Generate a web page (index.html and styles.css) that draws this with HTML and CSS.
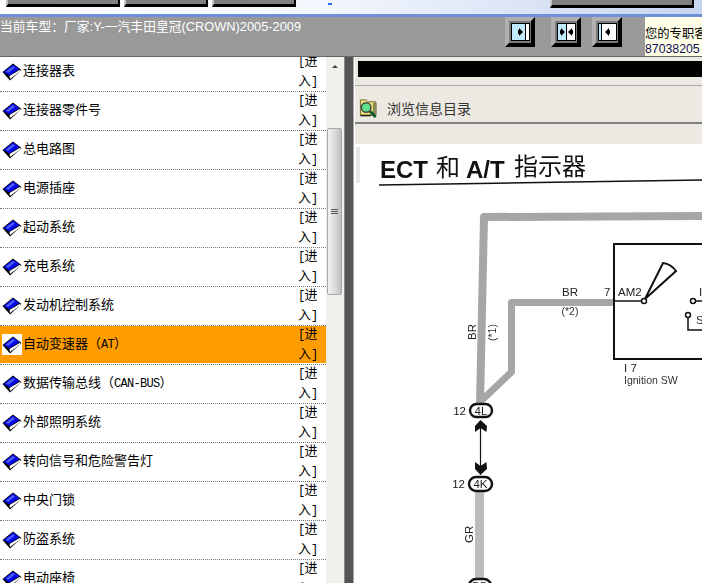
FILE: index.html
```html
<!DOCTYPE html>
<html lang="zh-CN">
<head>
    <meta charset="UTF-8">
    <title>ECT 和 A/T 指示器</title>
    <link rel="stylesheet" href="styles.css">
</head>
<body>
    <svg class="defs" width="0" height="0">
        <symbol id="book" viewBox="0 0 20 18">
            <polygon points="0.5,9 11,0.5 19.500,7 8,17.500" fill="#000"/>
            <polygon points="1.500,9 11,1.500 17.500,6 7.500,12.500" fill="#0808e8"/>
            <polygon points="4,8.500 11,3 13,4.500 6,10" fill="#4a5ef8"/>
            <polygon points="7.500,13 18,6.800 18.500,8 8,16" fill="#fff"/>
        </symbol>
    </svg>

    <!-- Top strip -->
    <div class="top-strip">
        <div class="top-btn top-btn-wide"></div>
        <div class="top-btn top-btn-mid"></div>
        <div class="top-btn top-btn-mid"></div>
        <div class="top-mark"></div>
        <div class="top-btn top-btn-right"></div>
    </div>

    <!-- Toolbar -->
    <div class="toolbar">
        <div class="car-label">当前车型：厂家:Y-一汽丰田皇冠(CROWN)2005-2009</div>
        <div class="tools">
            <div class="tool">
                <svg width="19" height="18" viewBox="0 0 19 18">
                    <rect x="0.500" y="0.500" width="18" height="17" fill="#bfeaff" stroke="#000"/>
                    <rect x="15" y="1" width="3" height="16" fill="#fff"/>
                    <line x1="14.500" y1="1" x2="14.500" y2="17" stroke="#000"/>
                    <polygon points="7,7 8,7 8,5 12,9 8,13 8,11 7,11" fill="#000"/>
                </svg>
            </div>
            <div class="tool">
                <svg width="19" height="18" viewBox="0 0 19 18">
                    <rect x="0.500" y="0.500" width="18" height="17" fill="#fff" stroke="#000"/>
                    <rect x="1" y="1" width="8" height="16" fill="#bfeaff"/>
                    <line x1="9.500" y1="1" x2="9.500" y2="17" stroke="#000"/>
                    <polygon points="3,7 4,7 4,5 8,9 4,13 4,11 3,11" fill="#000"/>
                    <polygon points="16,7 15,7 15,5 11,9 15,13 15,11 16,11" fill="#000"/>
                </svg>
            </div>
            <div class="tool tool-last">
                <svg width="19" height="18" viewBox="0 0 19 18">
                    <rect x="0.500" y="0.500" width="18" height="17" fill="#fff" stroke="#000"/>
                    <rect x="1" y="1" width="2" height="16" fill="#bfeaff"/>
                    <line x1="3.500" y1="1" x2="3.500" y2="17" stroke="#000"/>
                    <polygon points="12,7 11,7 11,5 7,9 11,13 11,11 12,11" fill="#000"/>
                </svg>
            </div>
        </div>
        <div class="contact">您的专职客服<span class="contact-num">87038205</span></div>
    </div>

    <div class="main">
        <!-- Left list -->
        <div class="list">
            <div class="row"><div class="row-inner"><span class="book"><svg width="20" height="18"><use href="#book"/></svg></span><span class="name">连接器表</span><span class="enter"><span class="latin">[</span>进入<span class="latin">]</span></span></div></div>
            <div class="row"><div class="row-inner"><span class="book"><svg width="20" height="18"><use href="#book"/></svg></span><span class="name">连接器零件号</span><span class="enter"><span class="latin">[</span>进入<span class="latin">]</span></span></div></div>
            <div class="row"><div class="row-inner"><span class="book"><svg width="20" height="18"><use href="#book"/></svg></span><span class="name">总电路图</span><span class="enter"><span class="latin">[</span>进入<span class="latin">]</span></span></div></div>
            <div class="row"><div class="row-inner"><span class="book"><svg width="20" height="18"><use href="#book"/></svg></span><span class="name">电源插座</span><span class="enter"><span class="latin">[</span>进入<span class="latin">]</span></span></div></div>
            <div class="row"><div class="row-inner"><span class="book"><svg width="20" height="18"><use href="#book"/></svg></span><span class="name">起动系统</span><span class="enter"><span class="latin">[</span>进入<span class="latin">]</span></span></div></div>
            <div class="row"><div class="row-inner"><span class="book"><svg width="20" height="18"><use href="#book"/></svg></span><span class="name">充电系统</span><span class="enter"><span class="latin">[</span>进入<span class="latin">]</span></span></div></div>
            <div class="row"><div class="row-inner"><span class="book"><svg width="20" height="18"><use href="#book"/></svg></span><span class="name">发动机控制系统</span><span class="enter"><span class="latin">[</span>进入<span class="latin">]</span></span></div></div>
            <div class="row active"><div class="row-inner"><span class="book"><svg width="20" height="18"><use href="#book"/></svg></span><span class="name">自动变速器（<span class="latin">AT</span>）</span><span class="enter"><span class="latin">[</span>进入<span class="latin">]</span></span></div></div>
            <div class="row"><div class="row-inner"><span class="book"><svg width="20" height="18"><use href="#book"/></svg></span><span class="name">数据传输总线（<span class="latin">CAN-BUS</span>）</span><span class="enter"><span class="latin">[</span>进入<span class="latin">]</span></span></div></div>
            <div class="row"><div class="row-inner"><span class="book"><svg width="20" height="18"><use href="#book"/></svg></span><span class="name">外部照明系统</span><span class="enter"><span class="latin">[</span>进入<span class="latin">]</span></span></div></div>
            <div class="row"><div class="row-inner"><span class="book"><svg width="20" height="18"><use href="#book"/></svg></span><span class="name">转向信号和危险警告灯</span><span class="enter"><span class="latin">[</span>进入<span class="latin">]</span></span></div></div>
            <div class="row"><div class="row-inner"><span class="book"><svg width="20" height="18"><use href="#book"/></svg></span><span class="name">中央门锁</span><span class="enter"><span class="latin">[</span>进入<span class="latin">]</span></span></div></div>
            <div class="row"><div class="row-inner"><span class="book"><svg width="20" height="18"><use href="#book"/></svg></span><span class="name">防盗系统</span><span class="enter"><span class="latin">[</span>进入<span class="latin">]</span></span></div></div>
            <div class="row"><div class="row-inner"><span class="book"><svg width="20" height="18"><use href="#book"/></svg></span><span class="name">电动座椅</span><span class="enter"><span class="latin">[</span>进入<span class="latin">]</span></span></div></div>
        </div>

        <!-- Scrollbar -->
        <div class="scrollbar">
            <div class="scroll-up"></div>
            <div class="scroll-thumb">
                <div class="grip"></div>
                <div class="grip"></div>
                <div class="grip"></div>
            </div>
        </div>

        <div class="splitter"></div>

        <!-- Right panel -->
        <div class="panel">
            <div class="black-bar"></div>
            <div class="browse">
                <svg width="20" height="21" viewBox="0 0 20 22">
                    <path d="M1 3h6l2 2h8v14H1z" fill="#f6e27a" stroke="#6b6b3a"/>
                    <rect x="14" y="6" width="4" height="13" fill="#8a8a5a"/>
                    <circle cx="7" cy="11" r="5" fill="#5fe08a" stroke="#444" stroke-width="1.500"/>
                    <line x1="11" y1="15" x2="17" y2="21" stroke="#0a5a2a" stroke-width="3"/>
                    <line x1="1" y1="19.500" x2="12" y2="19.500" stroke="#222" stroke-width="1.500"/>
                </svg>
                <span class="browse-text">浏览信息目录</span>
            </div>
            <div class="panel-gap"></div>
            <div class="sheet">
                <svg class="diagram" width="347" height="439" viewBox="355 144 347 439">
                    <rect x="356" y="147" width="4" height="36" fill="#e6e6e6"/>

                    <text class="title" x="380" y="178"><tspan class="title-bold">ECT</tspan><tspan x="436" y="176">和</tspan><tspan class="title-bold" x="466" y="178">A/T</tspan><tspan x="514" y="175">指示器</tspan></text>
                    <line x1="379" y1="185" x2="702" y2="180" stroke="#111" stroke-width="1.600"/>

                    <path class="wire" d="M702 216 L484 217 L480 404"/>
                    <path class="wire wire-thin" d="M614 302.500 L511.500 302.500 L511.500 372 L482 400"/>
                    <path class="wire wire-light" d="M479.500 491 L479.500 580"/>

                    <text class="lbl" x="570" y="296" text-anchor="middle">BR</text>
                    <text class="lbl" x="604" y="296">7</text>
                    <text class="lbl-sm" x="570" y="315" text-anchor="middle">(*2)</text>
                    <text class="lbl" transform="translate(476 340) rotate(-90)">BR</text>
                    <text class="lbl-sm" transform="translate(496 341) rotate(-90)">(*1)</text>
                    <text class="lbl" transform="translate(473 543) rotate(-90)">GR</text>

                    <rect x="614" y="244" width="100" height="115" fill="none" stroke="#111" stroke-width="2"/>
                    <text class="lbl" x="618" y="296">AM2</text>
                    <line x1="614" y1="301" x2="642" y2="301" stroke="#111" stroke-width="1.500"/>
                    <path d="M645 299 L663 263 Q671 264 676 271 Z" fill="#fff" stroke="#111" stroke-width="2"/>
                    <circle cx="644" cy="301" r="2.500" fill="#fff" stroke="#111" stroke-width="1.500"/>
                    <circle cx="693" cy="301" r="2.500" fill="#fff" stroke="#111" stroke-width="1.500"/>
                    <line x1="696" y1="301" x2="702" y2="301" stroke="#111" stroke-width="1.500"/>
                    <text class="lbl" x="699" y="296">I</text>
                    <circle cx="688" cy="315" r="2.500" fill="#fff" stroke="#111" stroke-width="1.500"/>
                    <path d="M688 318 V330 H702" fill="none" stroke="#111" stroke-width="1.500"/>
                    <text class="lbl" x="696" y="324">S</text>
                    <text class="lbl" x="624" y="372">I 7</text>
                    <text class="lbl-sm" x="624" y="384">Ignition SW</text>

                    <rect x="470" y="404" width="22" height="13" rx="6.500" fill="#fff" stroke="#111" stroke-width="2.400"/>
                    <text class="lbl" x="481" y="415" text-anchor="middle">4L</text>
                    <text class="lbl" x="466" y="415" text-anchor="end">12</text>

                    <line x1="480.500" y1="426" x2="480.500" y2="468" stroke="#111" stroke-width="1.200"/>
                    <path d="M480.500 420 L487 426 L486.500 432 L480.500 428 L475 432 L475 426 Z" fill="#111"/>
                    <path d="M480.500 475 L487 469 L486.500 462 L480.500 466 L475 462 L475 469 Z" fill="#111"/>

                    <rect x="469" y="477" width="23" height="14" rx="7" fill="#fff" stroke="#111" stroke-width="2.400"/>
                    <text class="lbl" x="480.500" y="488" text-anchor="middle">4K</text>
                    <text class="lbl" x="465" y="488" text-anchor="end">12</text>

                    <rect x="469" y="579" width="22" height="14" rx="7" fill="#fff" stroke="#111" stroke-width="2.400"/>
                    <text class="lbl" x="480" y="590" text-anchor="middle">BB</text>
                </svg>
            </div>
        </div>
    </div>
</body>
</html>
```

FILE: styles.css
```css
html, body {
    margin: 0;
    padding: 0;
    height: 583px;
    overflow: hidden;
    background: #fff;
    font-family: "Noto Sans CJK SC", sans-serif;
    color: #000;
}

.defs {
    display: none;
}

/* top strip */
.top-strip {
    display: flex;
    align-items: flex-start;
    gap: 4px;
    height: 14px;
    padding-left: 6px;
    background: linear-gradient(to right, #fff 0%, #f4f7fd 45%, #c6d5f0 100%);
}

.top-btn {
    box-sizing: border-box;
    height: 7px;
    background: #808080;
    border-left: 2px solid #c4c4c4;
    border-right: 2px solid #000;
    border-bottom: 3px solid #000;
}

.top-btn-wide {
    width: 114px;
}

.top-btn-mid {
    width: 84px;
}

.top-mark {
    width: 4px;
    height: 2px;
    margin: 3px 0 0 28px;
    background: #2a6ae0;
}

.top-btn-right {
    width: 144px;
    height: 8px;
    margin-left: auto;
    margin-right: 8px;
}

/* toolbar */
.toolbar {
    box-sizing: border-box;
    display: flex;
    height: 43px;
    background: #999;
    border-top: 3px solid #6f8fd8;
    border-bottom: 1px solid #666;
}

.car-label {
    padding-top: 1px;
    font-family: "Liberation Sans", "Noto Sans CJK SC", sans-serif;
    font-size: 12.800px;
    line-height: 18px;
    color: #fff;
    white-space: nowrap;
}

.tools {
    display: flex;
    margin-left: auto;
    margin-right: 23px;
}

.tool {
    box-sizing: border-box;
    display: flex;
    align-items: center;
    justify-content: center;
    width: 30px;
    height: 30px;
    margin-left: 16px;
    background: #7a7a7a;
    border-style: solid;
    border-width: 4px;
    border-color: #b0b0b0 #000 #000 #b0b0b0;
}

.tool-last {
    margin-left: 11px;
}

.contact {
    width: 57px;
    padding-top: 8px;
    overflow: hidden;
    background: #ffffe8;
    font-size: 12.300px;
    line-height: 17px;
    white-space: nowrap;
}

.contact-num {
    display: block;
    margin-top: -1px;
    font-family: "Liberation Sans", sans-serif;
    color: #10105a;
}

/* main area */
.main {
    display: flex;
    height: 526px;
    overflow: hidden;
}

.list {
    width: 326px;
    flex-shrink: 0;
    overflow: hidden;
    background: #fff;
}

.row {
    box-sizing: border-box;
    height: 39px;
    padding-bottom: 1px;
    border-bottom: 1px dotted #777;
}

.row:first-child {
    margin-top: -4px;
}

.row-inner {
    display: flex;
    align-items: center;
    height: 37px;
    padding-left: 2px;
    font-size: 13px;
}

.active .row-inner {
    background: #ff9c00;
}

.book {
    display: flex;
    align-items: center;
    width: 20px;
    height: 21px;
    margin-right: 1px;
}

.active .book {
    background: #fff;
}

.name {
    flex: 1;
    padding-bottom: 4px;
    white-space: nowrap;
}

.enter {
    align-self: flex-start;
    box-sizing: border-box;
    width: 28px;
    margin-top: -2px;
    line-height: 17px;
}

.latin {
    font-family: "Liberation Mono", monospace;
    font-size: 12px;
    letter-spacing: -0.700px;
}

/* scrollbar */
.scrollbar {
    box-sizing: border-box;
    width: 18px;
    flex-shrink: 0;
    padding-left: 1px;
    background: #f1f0ec;
}

.scroll-up {
    width: 0;
    height: 0;
    margin: 8px 0 0 5px;
    border-left: 3.500px solid transparent;
    border-right: 3.500px solid transparent;
    border-bottom: 3.500px solid #444;
}

.scroll-thumb {
    box-sizing: border-box;
    display: flex;
    flex-direction: column;
    justify-content: center;
    gap: 1px;
    width: 15px;
    height: 167px;
    margin-top: 59.500px;
    background: linear-gradient(to right, #f2f2f2, #d8d8d8 60%, #bdbdbd);
    border: 1px solid #a8a8a8;
    border-radius: 2px;
}

.grip {
    width: 7px;
    height: 1px;
    margin-left: 3px;
    background: #555;
}

.splitter {
    box-sizing: border-box;
    width: 10px;
    flex-shrink: 0;
    background: #555;
    border-left: 1px solid #888;
    border-right: 1px solid #aaa;
}

/* right panel */
.panel {
    display: flex;
    flex-direction: column;
    flex: 1;
    min-width: 0;
    border-left: 1px solid #fff;
    background: #ece9e2;
}

.black-bar {
    height: 16px;
    margin: 4px 0 8px 3px;
    background: #000;
}

.browse {
    display: flex;
    align-items: center;
    height: 29px;
    padding: 7px 0 0 4px;
    border-top: 1px solid #aaa;
    border-bottom: 2px solid #808080;
}

.browse-text {
    margin-left: 8px;
    font-size: 14px;
    color: #333;
}

.panel-gap {
    height: 20px;
}

.sheet {
    flex: 1;
    background: #fff;
    overflow: hidden;
}

.diagram {
    display: block;
    filter: blur(0.35px);
}

.title {
    font-family: "Noto Sans CJK SC", sans-serif;
    font-size: 24px;
    fill: #111;
}

.title-bold {
    font-family: "Liberation Sans", sans-serif;
    font-weight: bold;
}

.wire {
    fill: none;
    stroke: #a6a6a6;
    stroke-width: 8;
    stroke-linejoin: round;
}

.wire-thin {
    stroke-width: 7;
}

.wire-light {
    stroke: #bcbcbc;
    stroke-width: 9;
}

.lbl {
    font-family: "Liberation Sans", sans-serif;
    font-size: 11.500px;
    fill: #222;
}

.lbl-sm {
    font-family: "Liberation Sans", sans-serif;
    font-size: 10.500px;
    fill: #333;
}
```
